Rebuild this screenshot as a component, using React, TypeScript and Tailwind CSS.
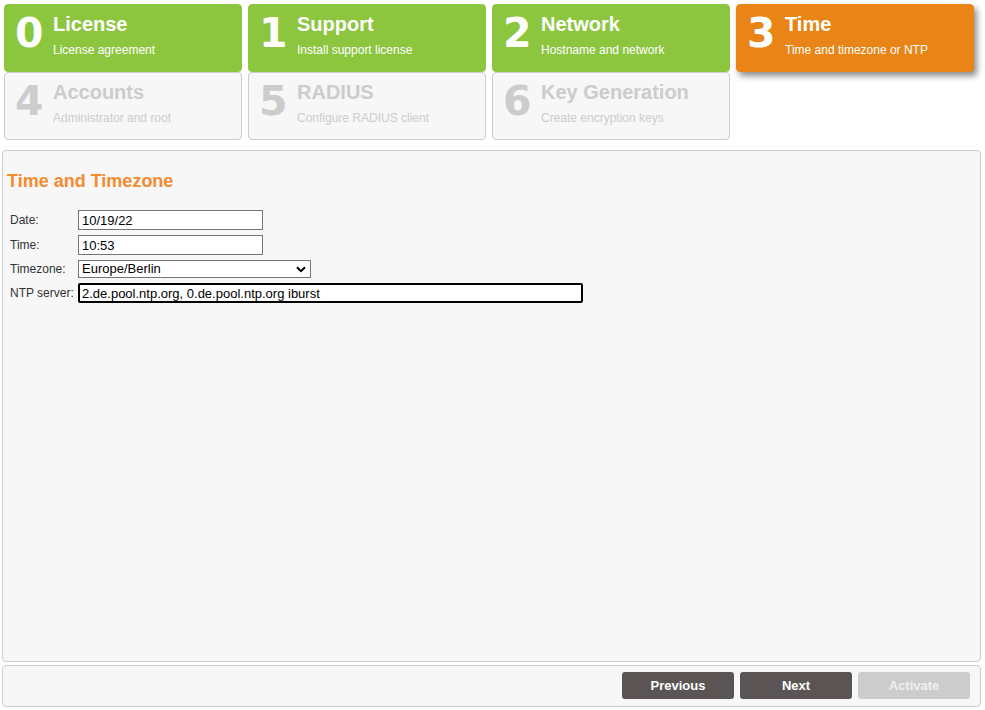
import React from 'react';

type Step = { n: number; title: string; sub: string; state: 'done' | 'active' | 'todo' };

const steps: Step[] = [
  { n: 0, title: 'License', sub: 'License agreement', state: 'done' },
  { n: 1, title: 'Support', sub: 'Install support license', state: 'done' },
  { n: 2, title: 'Network', sub: 'Hostname and network', state: 'done' },
  { n: 3, title: 'Time', sub: 'Time and timezone or NTP', state: 'active' },
  { n: 4, title: 'Accounts', sub: 'Administrator and root', state: 'todo' },
  { n: 5, title: 'RADIUS', sub: 'Configure RADIUS client', state: 'todo' },
  { n: 6, title: 'Key Generation', sub: 'Create encryption keys', state: 'todo' },
];

function StepTile({ step }: { step: Step }) {
  const tone =
    step.state === 'done'
      ? 'bg-[#8cc63f] border-[#8cc63f] text-white'
      : step.state === 'active'
        ? 'bg-[#e98516] border-[#e98516] text-white shadow-[3px_4px_6px_rgba(0,0,0,0.45)]'
        : 'bg-[#f7f7f7] border-[#cccccc] text-[#cccccc]';
  return (
    <div className={`flex h-[68px] items-start rounded-[4px] border pl-[10px] pt-[7px] ${tone}`}>
      {/* digit renders in DejaVu like the original's fallback font */}
      <span className="w-[38px] shrink-0 font-['DejaVu_Sans',sans-serif] text-[41px] font-bold leading-[42px]">
        {step.n}
      </span>
      <div className="flex flex-col">
        <span className="text-[20px] font-bold leading-[24px]">{step.title}</span>
        <span className="mt-[7px] text-[12px] leading-[14px]">{step.sub}</span>
      </div>
    </div>
  );
}

function Row({ label, children }: { label: string; children: React.ReactNode }) {
  return (
    <div className="flex items-center">
      <span className="w-[68px] shrink-0 text-[12px] text-[#333]">{label}</span>
      {children}
    </div>
  );
}

const field = 'h-[20px] border border-[#767676] bg-white px-[3px] text-[13px] leading-[18px] text-black outline-none';

export default function App() {
  return (
    <div className="min-h-[710px] w-[985px] bg-white font-['Liberation_Sans',Arial,sans-serif]">
      <div className="grid grid-cols-[238px_238px_238px_238px] gap-x-[6px] px-[4px] pt-[4px]">
        {steps.map((s) => (
          <StepTile key={s.n} step={s} />
        ))}
      </div>

      <div className="mx-[2px] mt-[10px] h-[512px] w-[979px] rounded-[4px] border border-[#cccccc] bg-[#f7f7f7] px-[4px]">
        <h2 className="mt-[19px] text-[18px] font-bold leading-[22px] text-[#f58a2e]">Time and Timezone</h2>
        <div className="mt-[18px] flex flex-col gap-[5px] pl-[3px]">
          <Row label="Date:">
            <input defaultValue="10/19/22" className={`${field} w-[185px]`} />
          </Row>
          <Row label="Time:">
            <input defaultValue="10:53" className={`${field} w-[185px]`} />
          </Row>
          <Row label="Timezone:">
            <div className="relative flex h-[18px] w-[233px] items-center border border-[#767676] bg-white px-[3px] text-[13px] text-black">
              Europe/Berlin
              <svg className="absolute right-[4px] top-[5px]" width="10" height="7" viewBox="0 0 10 7">
                <path d="M1 1.2 L5 5.2 L9 1.2" fill="none" stroke="#000" strokeWidth="2" />
              </svg>
            </div>
          </Row>
          <Row label="NTP server:">
            <input
              defaultValue="2.de.pool.ntp.org, 0.de.pool.ntp.org iburst"
              className="h-[20px] w-[505px] rounded-[2px] border-2 border-black bg-white px-[2px] text-[13px] leading-[16px] text-black outline-none"
            />
          </Row>
        </div>
      </div>

      <div className="mx-[2px] mt-[3px] flex h-[42px] w-[979px] items-center justify-end gap-[6px] rounded-[4px] border border-[#cccccc] bg-[#f7f7f7] pr-[10px] pb-[1px]">
        <button className="h-[27px] w-[112px] rounded-[3px] bg-[#5a5554] text-[13px] font-bold text-white">Previous</button>
        <button className="h-[27px] w-[112px] rounded-[3px] bg-[#5a5554] text-[13px] font-bold text-white">Next</button>
        <button className="h-[27px] w-[112px] rounded-[3px] bg-[#cccccc] text-[13px] font-bold text-[#f0f0f0]">Activate</button>
      </div>
    </div>
  );
}
